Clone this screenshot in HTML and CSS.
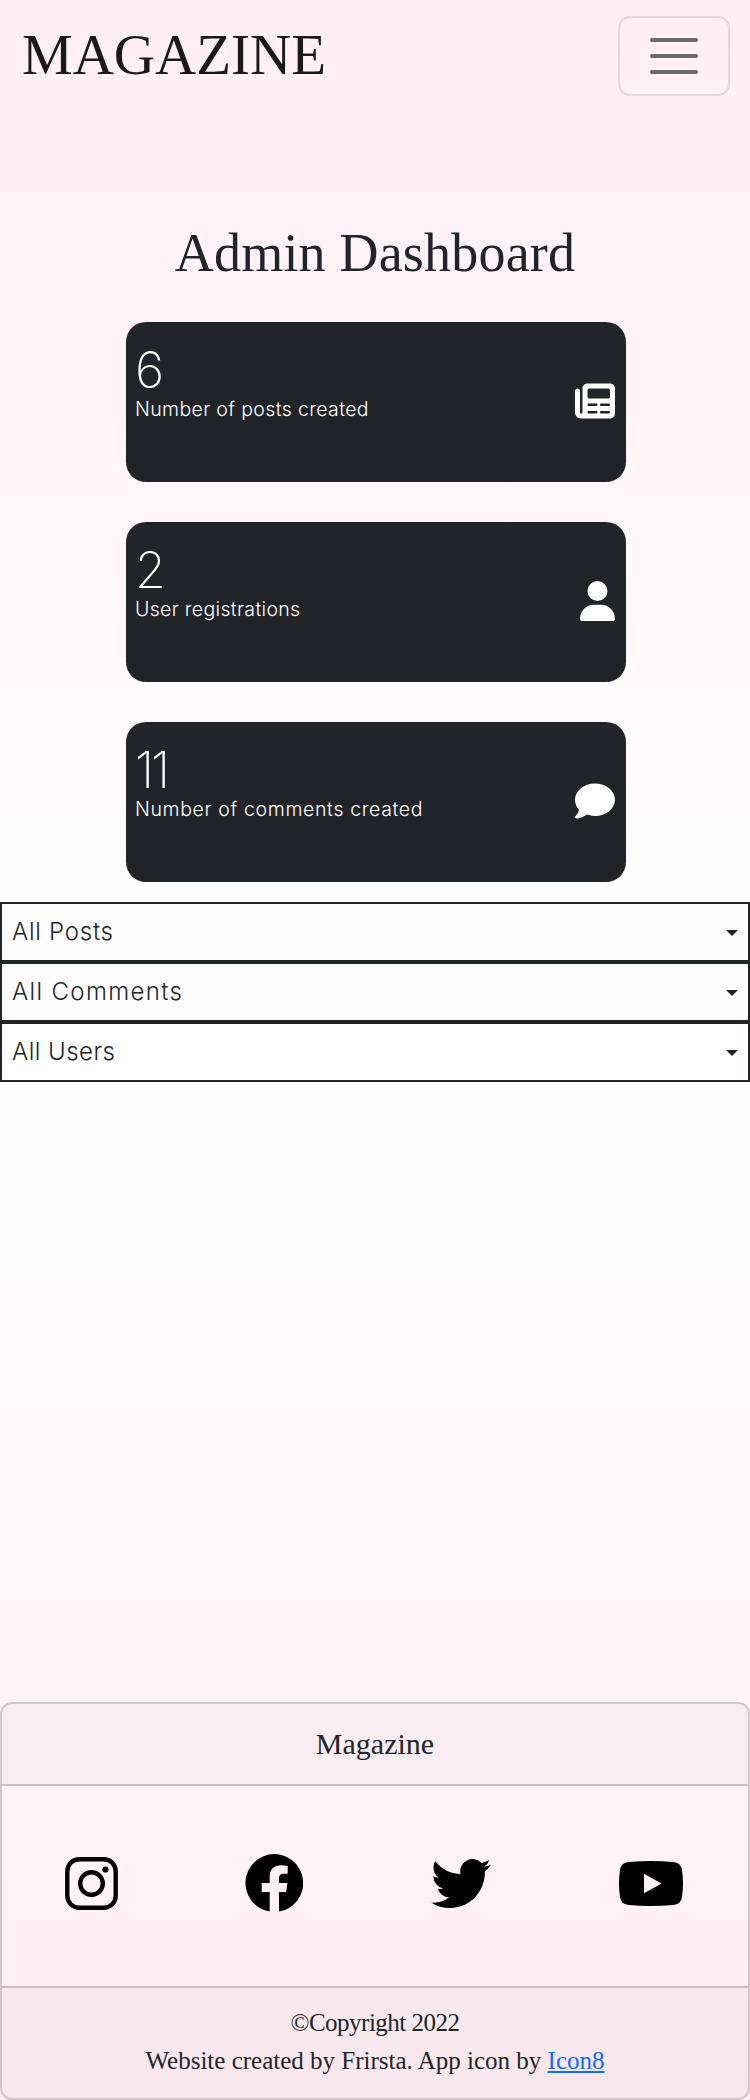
FILE: index.html
```html
<!DOCTYPE html>
<html lang="en">
<head>
<meta charset="utf-8">
<title>Magazine</title>
<link rel="stylesheet" href="styles.css">
</head>
<body>
<header class="navbar">
  <a class="brand">MAGAZINE</a>
  <button class="toggler" aria-label="Menu">
    <svg width="60" height="60" viewBox="0 0 30 30"><path stroke="#1a1215" stroke-opacity=".62" stroke-width="2" stroke-linecap="round" d="M4 7h22M4 15h22M4 23h22"/></svg>
  </button>
</header>
<main>
  <h1 class="title">Admin Dashboard</h1>
  <section class="stats">
    <div class="stat">
      <div><div class="number">6</div><div class="label label-posts">Number of posts created</div></div>
      <svg class="stat-icon" width="40" height="40" viewBox="0 0 512 512"><path fill="#fff" d="M96 96c0-35.300 28.700-64 64-64H448c35.300 0 64 28.700 64 64V416c0 35.300-28.700 64-64 64H80c-44.200 0-80-35.800-80-80V128c0-17.700 14.300-32 32-32s32 14.300 32 32V400c0 8.800 7.200 16 16 16s16-7.200 16-16V96zm64 24v80c0 13.300 10.700 24 24 24H424c13.300 0 24-10.700 24-24V120c0-13.300-10.700-24-24-24H184c-13.300 0-24 10.700-24 24zm0 184c0 8.800 7.200 16 16 16h96c8.800 0 16-7.200 16-16s-7.200-16-16-16H176c-8.800 0-16 7.200-16 16zm160 0c0 8.800 7.200 16 16 16h96c8.800 0 16-7.200 16-16s-7.200-16-16-16H336c-8.800 0-16 7.200-16 16zM160 400c0 8.800 7.200 16 16 16h96c8.800 0 16-7.200 16-16s-7.200-16-16-16H176c-8.800 0-16 7.200-16 16zm160 0c0 8.800 7.200 16 16 16h96c8.800 0 16-7.200 16-16s-7.200-16-16-16H336c-8.800 0-16 7.200-16 16z"/></svg>
    </div>
    <div class="stat">
      <div><div class="number">2</div><div class="label label-users">User registrations</div></div>
      <svg class="stat-icon" width="35" height="40" viewBox="0 0 448 512"><path fill="#fff" d="M224 256A128 128 0 1 0 224 0a128 128 0 1 0 0 256zm-45.700 48C79.800 304 0 383.800 0 482.300C0 498.700 13.300 512 29.700 512H418.300c16.400 0 29.700-13.300 29.700-29.700C448 383.800 368.200 304 269.700 304H178.300z"/></svg>
    </div>
    <div class="stat">
      <div><div class="number number-narrow">11</div><div class="label label-comments">Number of comments created</div></div>
      <svg class="stat-icon" width="40" height="40" viewBox="0 0 512 512"><path fill="#fff" d="M512 240c0 114.900-114.600 208-256 208c-37.100 0-72.300-6.400-104.100-17.900c-11.900 8.700-31.300 20.600-54.300 30.600C73.600 471.100 44.700 480 16 480c-6.500 0-12.300-3.900-14.800-9.900c-2.500-6-1.100-12.800 3.400-17.400c17-19 38-48 46-83C19.200 335 0 290 0 240C0 125.100 114.600 32 256 32s256 93.100 256 208z"/></svg>
    </div>
  </section>
  <section class="lists">
    <button class="list list-posts"><span>All Posts</span><i class="caret"></i></button>
    <button class="list list-comments"><span>All Comments</span><i class="caret"></i></button>
    <button class="list list-users"><span>All Users</span><i class="caret"></i></button>
  </section>
</main>
<footer class="footer">
  <div class="footer-head">Magazine</div>
  <div class="socials">
    <svg width="53" height="53" viewBox="0 0 53 53"><rect x="2.300" y="2.300" width="48.400" height="48.400" rx="12" fill="none" stroke="#000" stroke-width="4.400"/><circle cx="26.500" cy="26.500" r="11.300" fill="none" stroke="#000" stroke-width="4.400"/><circle cx="40.500" cy="12.500" r="3.100"/></svg>
    <svg class="facebook" width="58" height="58" viewBox="0 0 58 58"><path d="M29 0a29 29 0 0 1 5 57.600V38h7.200l1.200-9H34v-4.500c0-3 1.200-4.700 4.700-4.700h4v-8c-12-2.200-18 1.700-18 11V29h-8v9h8v19.600A29 29 0 0 1 29 0z"/></svg>
    <svg width="60" height="49" viewBox="0 1.500 16 13" preserveAspectRatio="none"><path d="M5.026 15c6.038 0 9.341-5.003 9.341-9.334 0-.140 0-.282-.006-.422A6.685 6.685 0 0 0 16 3.542a6.658 6.658 0 0 1-1.889.518 3.301 3.301 0 0 0 1.447-1.817 6.533 6.533 0 0 1-2.087.793A3.286 3.286 0 0 0 7.875 6.030 9.325 9.325 0 0 1 1.108 2.600a3.289 3.289 0 0 0 1.018 4.382A3.323 3.323 0 0 1 .640 6.575v.045a3.288 3.288 0 0 0 2.632 3.218 3.203 3.203 0 0 1-.865.115 3.230 3.230 0 0 1-.614-.057 3.283 3.283 0 0 0 3.067 2.277A6.588 6.588 0 0 1 .780 13.580a6.320 6.320 0 0 1-.780-.045A9.344 9.344 0 0 0 5.026 15z" transform="translate(0 -.5)"/></svg>
    <svg width="64" height="45" viewBox="0 0 64 45"><path fill-rule="evenodd" d="M10 1Q32-1 54 1Q62 1.500 63 9Q65 22.500 63 36Q62 43.500 54 44Q32 46 10 44Q2 43.500 1 36Q-1 22.500 1 9Q2 1.500 10 1zM25 12.700v19.600L42.500 22.500z"/></svg>
  </div>
  <div class="footer-foot">
    <div class="copyright">©Copyright 2022</div>
    <div class="credit">Website created by Frirsta. App icon by <a class="link">Icon8</a></div>
  </div>
</footer>
</body>
</html>
```

FILE: styles.css
```css
* { box-sizing: border-box; }
body {
  margin: 0;
  width: 750px;
  height: 2100px;
  display: flex;
  flex-direction: column;
  color: #212529;
  font-family: "Liberation Serif", serif;
  background: linear-gradient(#ffeff4, #fff 50%, #ffeff4);
}
button { font: inherit; color: inherit; background: none; }
.navbar {
  display: flex;
  justify-content: space-between;
  align-items: flex-start;
  height: 112px;
  padding: 16px 20px 0 22px;
}
.brand { font-size: 57px; line-height: 78px; color: #1a1a1c; }
.toggler {
  width: 112px;
  height: 80px;
  padding: 0;
  display: flex;
  align-items: center;
  justify-content: center;
  border: 2px solid rgba(0, 0, 0, .1);
  border-radius: 12px;
}
main { flex: 1; }
.title {
  margin: 109px 0 0;
  height: 101px;
  font-size: 54px;
  line-height: 64px;
  font-weight: 400;
  text-align: center;
  letter-spacing: .2px;
}
.stats { display: grid; gap: 40px; width: 500px; margin-left: 126px; }
.stat {
  height: 160px;
  padding: 19px 11px 0 9px;
  display: flex;
  justify-content: space-between;
  border-radius: 20px;
  background: #212529;
  color: #fff;
  font-family: Inter, sans-serif;
  font-weight: 200;
}
.stat-icon { margin-top: 40px; }
.number { font-size: 50px; line-height: 58px; }
.number-narrow { letter-spacing: -3px; }
.label { font-size: 19.500px; line-height: 20px; font-weight: 300; white-space: nowrap; }
.label-posts { letter-spacing: .36px; }
.label-users { letter-spacing: .33px; }
.label-comments { letter-spacing: .64px; }
.lists { margin-top: 20px; }
.list {
  display: flex;
  justify-content: space-between;
  align-items: center;
  width: 100%;
  height: 60px;
  padding: 0 10px;
  border: 2px solid #212529;
  font: 300 24px/30px Inter, sans-serif;
}
.list-posts { letter-spacing: .75px; }
.list-comments { letter-spacing: 1.35px; }
.list-users { letter-spacing: .48px; }
.caret {
  margin-top: 2px;
  border: 6px solid transparent;
  border-top-color: #212529;
  border-bottom: 0;
}
.footer {
  height: 398px;
  border: 2px solid rgba(0, 0, 0, .175);
  border-radius: 12px;
  overflow: hidden;
  text-align: center;
}
.footer-head {
  height: 82px;
  font-size: 30px;
  line-height: 80px;
  background: rgba(0, 0, 0, .03);
  border-bottom: 2px solid rgba(0, 0, 0, .175);
}
.socials {
  height: 200px;
  display: flex;
  justify-content: space-between;
  align-items: center;
  padding: 0 65px 6px 63px;
}
.facebook { margin: 0 1px 0 -1px; }
.footer-foot {
  height: 114px;
  padding-top: 16px;
  font-size: 25px;
  line-height: 38px;
  background: rgba(0, 0, 0, .03);
  border-top: 2px solid rgba(0, 0, 0, .175);
}
.copyright { letter-spacing: -.5px; }
.link { color: #0d6efd; text-decoration: underline; }
```
